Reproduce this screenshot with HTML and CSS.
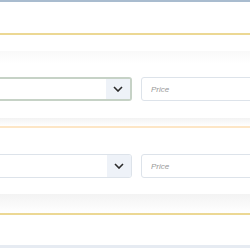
FILE: index.html
```html
<!DOCTYPE html>
<html lang="en">
<head>
    <meta charset="UTF-8" />
    <title>Price filters</title>
    <link rel="stylesheet" href="styles.css">
</head>
<body>
    <div class="page">
        <!-- Header -->
        <div class="panel-head head-top head-yellow"></div>

        <!-- First filter -->
        <div class="panel-body body-first">
            <div class="fade"></div>
            <div class="filter-row">
                <div class="select active">
                    <span class="select-value"></span>
                    <span class="select-arrow">
                        <svg width="10" height="6" viewBox="0 0 10 6"><path d="M1 1l4 4 4-4" fill="none" stroke="#2b2b2b" stroke-width="1.6" /></svg>
                    </span>
                </div>
                <input class="price" type="text" placeholder="Price" />
            </div>
        </div>

        <div class="panel-head head-mid head-orange"></div>

        <!-- Second filter -->
        <div class="panel-body body-second">
            <div class="filter-row">
                <div class="select">
                    <span class="select-value"></span>
                    <span class="select-arrow">
                        <svg width="10" height="6" viewBox="0 0 10 6"><path d="M1 1l4 4 4-4" fill="none" stroke="#2b2b2b" stroke-width="1.6" /></svg>
                    </span>
                </div>
                <input class="price" type="text" placeholder="Price" />
            </div>
        </div>

        <div class="panel-head head-low head-yellow"></div>

        <div class="panel-body body-last"></div>
    </div>
</body>
</html>
```

FILE: styles.css
```css
* {
    box-sizing: border-box;
    margin: 0;
    padding: 0;
}

body {
    background: #fff;
    font-family: 'Liberation Sans', Arial, sans-serif;
    overflow: hidden;
}

.page {
    width: 250px;
    overflow: hidden;
}

/* Section headers */
.panel-head {
    background: linear-gradient(#f3f3f3, #fff);
}

.head-top {
    height: 35px;
    background: #fff;
    border-top: 2px solid #a9bccf;
}

.head-mid {
    height: 10px;
}

.head-low {
    height: 21px;
}

.head-yellow {
    border-bottom: 2px solid #ecd894;
}

.head-orange {
    border-bottom: 2px solid #fde6c6;
}

/* Section bodies */
.body-first {
    padding-top: 16px;
    padding-bottom: 17px;
}

.fade {
    height: 12px;
    background: linear-gradient(#f9f9f9, #fff);
    margin-bottom: 14px;
}

.body-second {
    padding-top: 26px;
    padding-bottom: 16px;
}

.body-last {
    height: 33px;
    border-bottom: 3px solid #e6ebf2;
}

/* Filter row */
.filter-row {
    display: flex;
    gap: 9px;
    margin-left: -20px;
    width: 300px;
}

.select {
    width: 152px;
    height: 24px;
    display: flex;
    border: 1px solid #dde3ea;
    border-radius: 3px;
    background: #fff;
    overflow: hidden;
}

.select.active {
    border: 2px solid #c6d2c6;
}

.select-value {
    flex: 1;
}

.select-arrow {
    width: 24px;
    background: #eef2f8;
    display: flex;
    align-items: center;
    justify-content: center;
}

.price {
    width: 139px;
    height: 24px;
    border: 1px solid #dde3ea;
    border-radius: 3px;
    padding-left: 9px;
    font-family: 'Liberation Sans', Arial, sans-serif;
    font-size: 8px;
    font-style: italic;
    outline: none;
}

.price::placeholder {
    color: #999;
}
```
